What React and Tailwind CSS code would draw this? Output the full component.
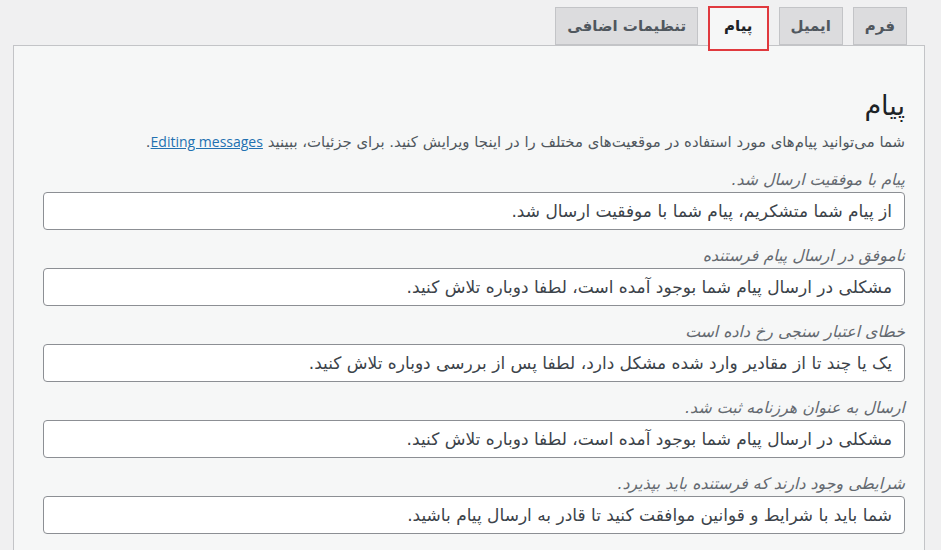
import React from 'react';

const fa = { fontFamily: '"DejaVu Sans", Tahoma, sans-serif' };

export default function App() {
  const tabs = [
    { label: 'فرم' },
    { label: 'ایمیل' },
    { label: 'پیام', active: true },
    { label: 'تنظیمات اضافی' },
  ];

  const fields = [
    {
      label: 'پیام با موفقیت ارسال شد.',
      value: 'از پیام شما متشکریم، پیام شما با موفقیت ارسال شد.',
    },
    {
      label: 'ناموفق در ارسال پیام فرستنده',
      value: 'مشکلی در ارسال پیام شما بوجود آمده است، لطفا دوباره تلاش کنید.',
    },
    {
      label: 'خطای اعتبار سنجی رخ داده است',
      value: 'یک یا چند تا از مقادیر وارد شده مشکل دارد، لطفا پس از بررسی دوباره تلاش کنید.',
    },
    {
      label: 'ارسال به عنوان هرزنامه ثبت شد.',
      value: 'مشکلی در ارسال پیام شما بوجود آمده است، لطفا دوباره تلاش کنید.',
    },
    {
      label: 'شرایطی وجود دارند که فرستنده باید بپذیرد.',
      value: 'شما باید با شرایط و قوانین موافقت کنید تا قادر به ارسال پیام باشید.',
    },
  ];

  return (
    <div dir="rtl" style={fa} className="w-[941px] h-[550px] overflow-hidden bg-[#f0f0f1] pt-[7px] pr-[16px] pl-[13px]">
      {/* Tabs */}
      <div className="flex gap-[10px] pr-[18px] -mb-px relative z-10">
        {tabs.map((tab) => (
          <div
            key={tab.label}
            className={
              tab.active
                ? 'relative h-[39px] px-[15px] flex items-center bg-[#f6f7f7] border border-[#c3c4c7] border-b-[#f6f7f7] text-[15px] font-bold text-[#1d2327]'
                : 'h-[38px] px-[11px] flex items-center bg-[#dcdcde] border border-[#c3c4c7] text-[15px] font-bold text-[#50575e]'
            }
          >
            {tab.label}
            {tab.active && (
              <span className="absolute -top-[2px] -left-px -right-px -bottom-[6px] border-2 border-[#e0393e] pointer-events-none" />
            )}
          </div>
        ))}
      </div>

      {/* Panel */}
      <div className="h-[600px] bg-[#f6f7f7] border border-[#c3c4c7] pt-[46px] pr-[19px] pl-[27px]">
        <h2 className="text-[27px] leading-[28px] text-[#1d2327]">پیام</h2>
        <p className="mt-[12px] text-[14.9px] leading-[20px] text-[#50575e]">
          شما می‌توانید پیام‌های مورد استفاده در موقعیت‌های مختلف را در اینجا ویرایش کنید. برای جزئیات، ببینید{' '}
          <a href="#" className="text-[#2271b1] underline text-[14px]" style={{ fontFamily: '"Open Sans", sans-serif' }}>
            Editing messages
          </a>
          .
        </p>

        <div className="mt-[18px] flex flex-col gap-4 w-[862px]">
          {fields.map((field, i) => (
            <div key={i}>
              <label className="block mb-[2px] text-[15.8px] leading-[20px] italic text-[#646970]">{field.label}</label>
              <input
                type="text"
                readOnly
                defaultValue={field.value}
                dir="rtl"
                style={fa}
                className="w-full h-[38px] px-[12px] bg-white border border-[#8c8f94] rounded-[4px] text-[17px] text-[#3c434a] outline-none"
              />
            </div>
          ))}
        </div>
      </div>
    </div>
  );
}
